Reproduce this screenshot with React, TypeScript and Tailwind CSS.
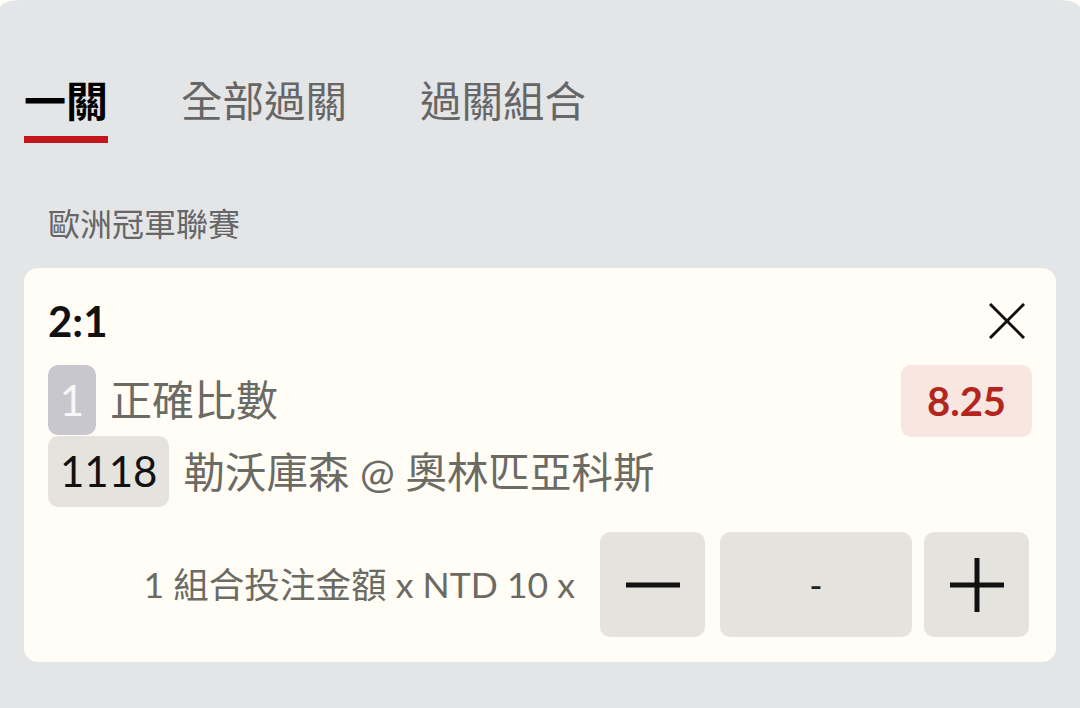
import React from "react";

const FONT = "font-['Lato','Noto_Sans_CJK_TC',sans-serif]";

function CloseIcon() {
  return (
    <svg width="36" height="36" viewBox="0 0 36 36" fill="none">
      <line x1="1" y1="1" x2="35" y2="35" stroke="#111" strokeWidth="3" />
      <line x1="35" y1="1" x2="1" y2="35" stroke="#111" strokeWidth="3" />
    </svg>
  );
}

function MinusIcon() {
  return (
    <svg width="54" height="54" viewBox="0 0 54 54" fill="none">
      <line x1="0" y1="27" x2="54" y2="27" stroke="#111" strokeWidth="5" />
    </svg>
  );
}

function PlusIcon() {
  return (
    <svg width="54" height="54" viewBox="0 0 54 54" fill="none">
      <line x1="0" y1="27" x2="54" y2="27" stroke="#111" strokeWidth="5" />
      <line x1="27" y1="0" x2="27" y2="54" stroke="#111" strokeWidth="5" />
    </svg>
  );
}

export default function App() {
  return (
    <div className={`w-[1080px] h-[708px] overflow-hidden bg-[#fffdf6] ${FONT}`}>
      <div className="h-full bg-[#e4e5e7] rounded-t-[22px_8px] px-6 pt-[80px]">
        {/* Tabs */}
        <div className="flex gap-[73px]">
          <div className="flex flex-col">
            <span className="text-[42px] leading-[42px] font-bold text-black">一關</span>
            <div className="mt-[14px] h-[7px] bg-[#c0161c]" />
          </div>
          <div className="flex flex-col">
            <span className="text-[41.5px] leading-[42px] text-[#666666]">全部過關</span>
          </div>
          <div className="flex flex-col">
            <span className="text-[41.5px] leading-[42px] text-[#666666]">過關組合</span>
          </div>
        </div>

        {/* League */}
        <div className="mt-[64px] pl-[24px] text-[32px] leading-[34px] text-[#666666]">歐洲冠軍聯賽</div>

        {/* Card */}
        <div className="mt-[27px] bg-[#fffdf6] rounded-[14px] px-6 pt-[32px] pb-[25px]">
          <div className="flex items-center justify-between h-[42px]">
            <span className="text-[42px] leading-[42px] font-bold text-[#111111]">2:1</span>
            <div className="mr-[7px] flex items-center">
              <CloseIcon />
            </div>
          </div>

          <div className="mt-[23px] flex items-start justify-between h-[71px]">
            <div className="flex items-center h-[70px] gap-[14px]">
              <div className="w-[48px] h-[70px] rounded-[10px] bg-[#c8c7ce] flex items-center justify-center text-[42px] text-[#f7f7f7]">
                1
              </div>
              <span className="text-[42px] leading-[42px] text-[#6b6a63]">正確比數</span>
            </div>
            <div className="w-[131px] h-[72px] rounded-[10px] bg-[#f8e7e1] flex items-center justify-center text-[40px] font-bold text-[#b3261e]">
              8.25
            </div>
          </div>

          <div className="flex items-center h-[71px] gap-[14px]">
            <div className="h-[71px] px-[12px] rounded-[10px] bg-[#e5e3dd] flex items-center text-[42px] text-[#111111]">
              1118
            </div>
            <span className="text-[41.5px] leading-[42px] text-[#6b6a63]">勒沃庫森 @ 奧林匹亞科斯</span>
          </div>

          <div className="mt-[25px] flex items-center justify-end">
            <span className="text-[35.6px] leading-[40px] text-[#6b6a63] mr-[25px]">1 組合投注金額 x NTD 10 x</span>
            <div className="w-[105px] h-[105px] rounded-[10px] bg-[#e5e3de] flex items-center justify-center">
              <MinusIcon />
            </div>
            <div className="ml-[15px] w-[192px] h-[105px] rounded-[10px] bg-[#e5e3de] flex items-center justify-center text-[36px] text-[#222222]">
              -
            </div>
            <div className="ml-[12px] mr-[3px] w-[105px] h-[105px] rounded-[10px] bg-[#e5e3de] flex items-center justify-center">
              <PlusIcon />
            </div>
          </div>
        </div>
      </div>
    </div>
  );
}
